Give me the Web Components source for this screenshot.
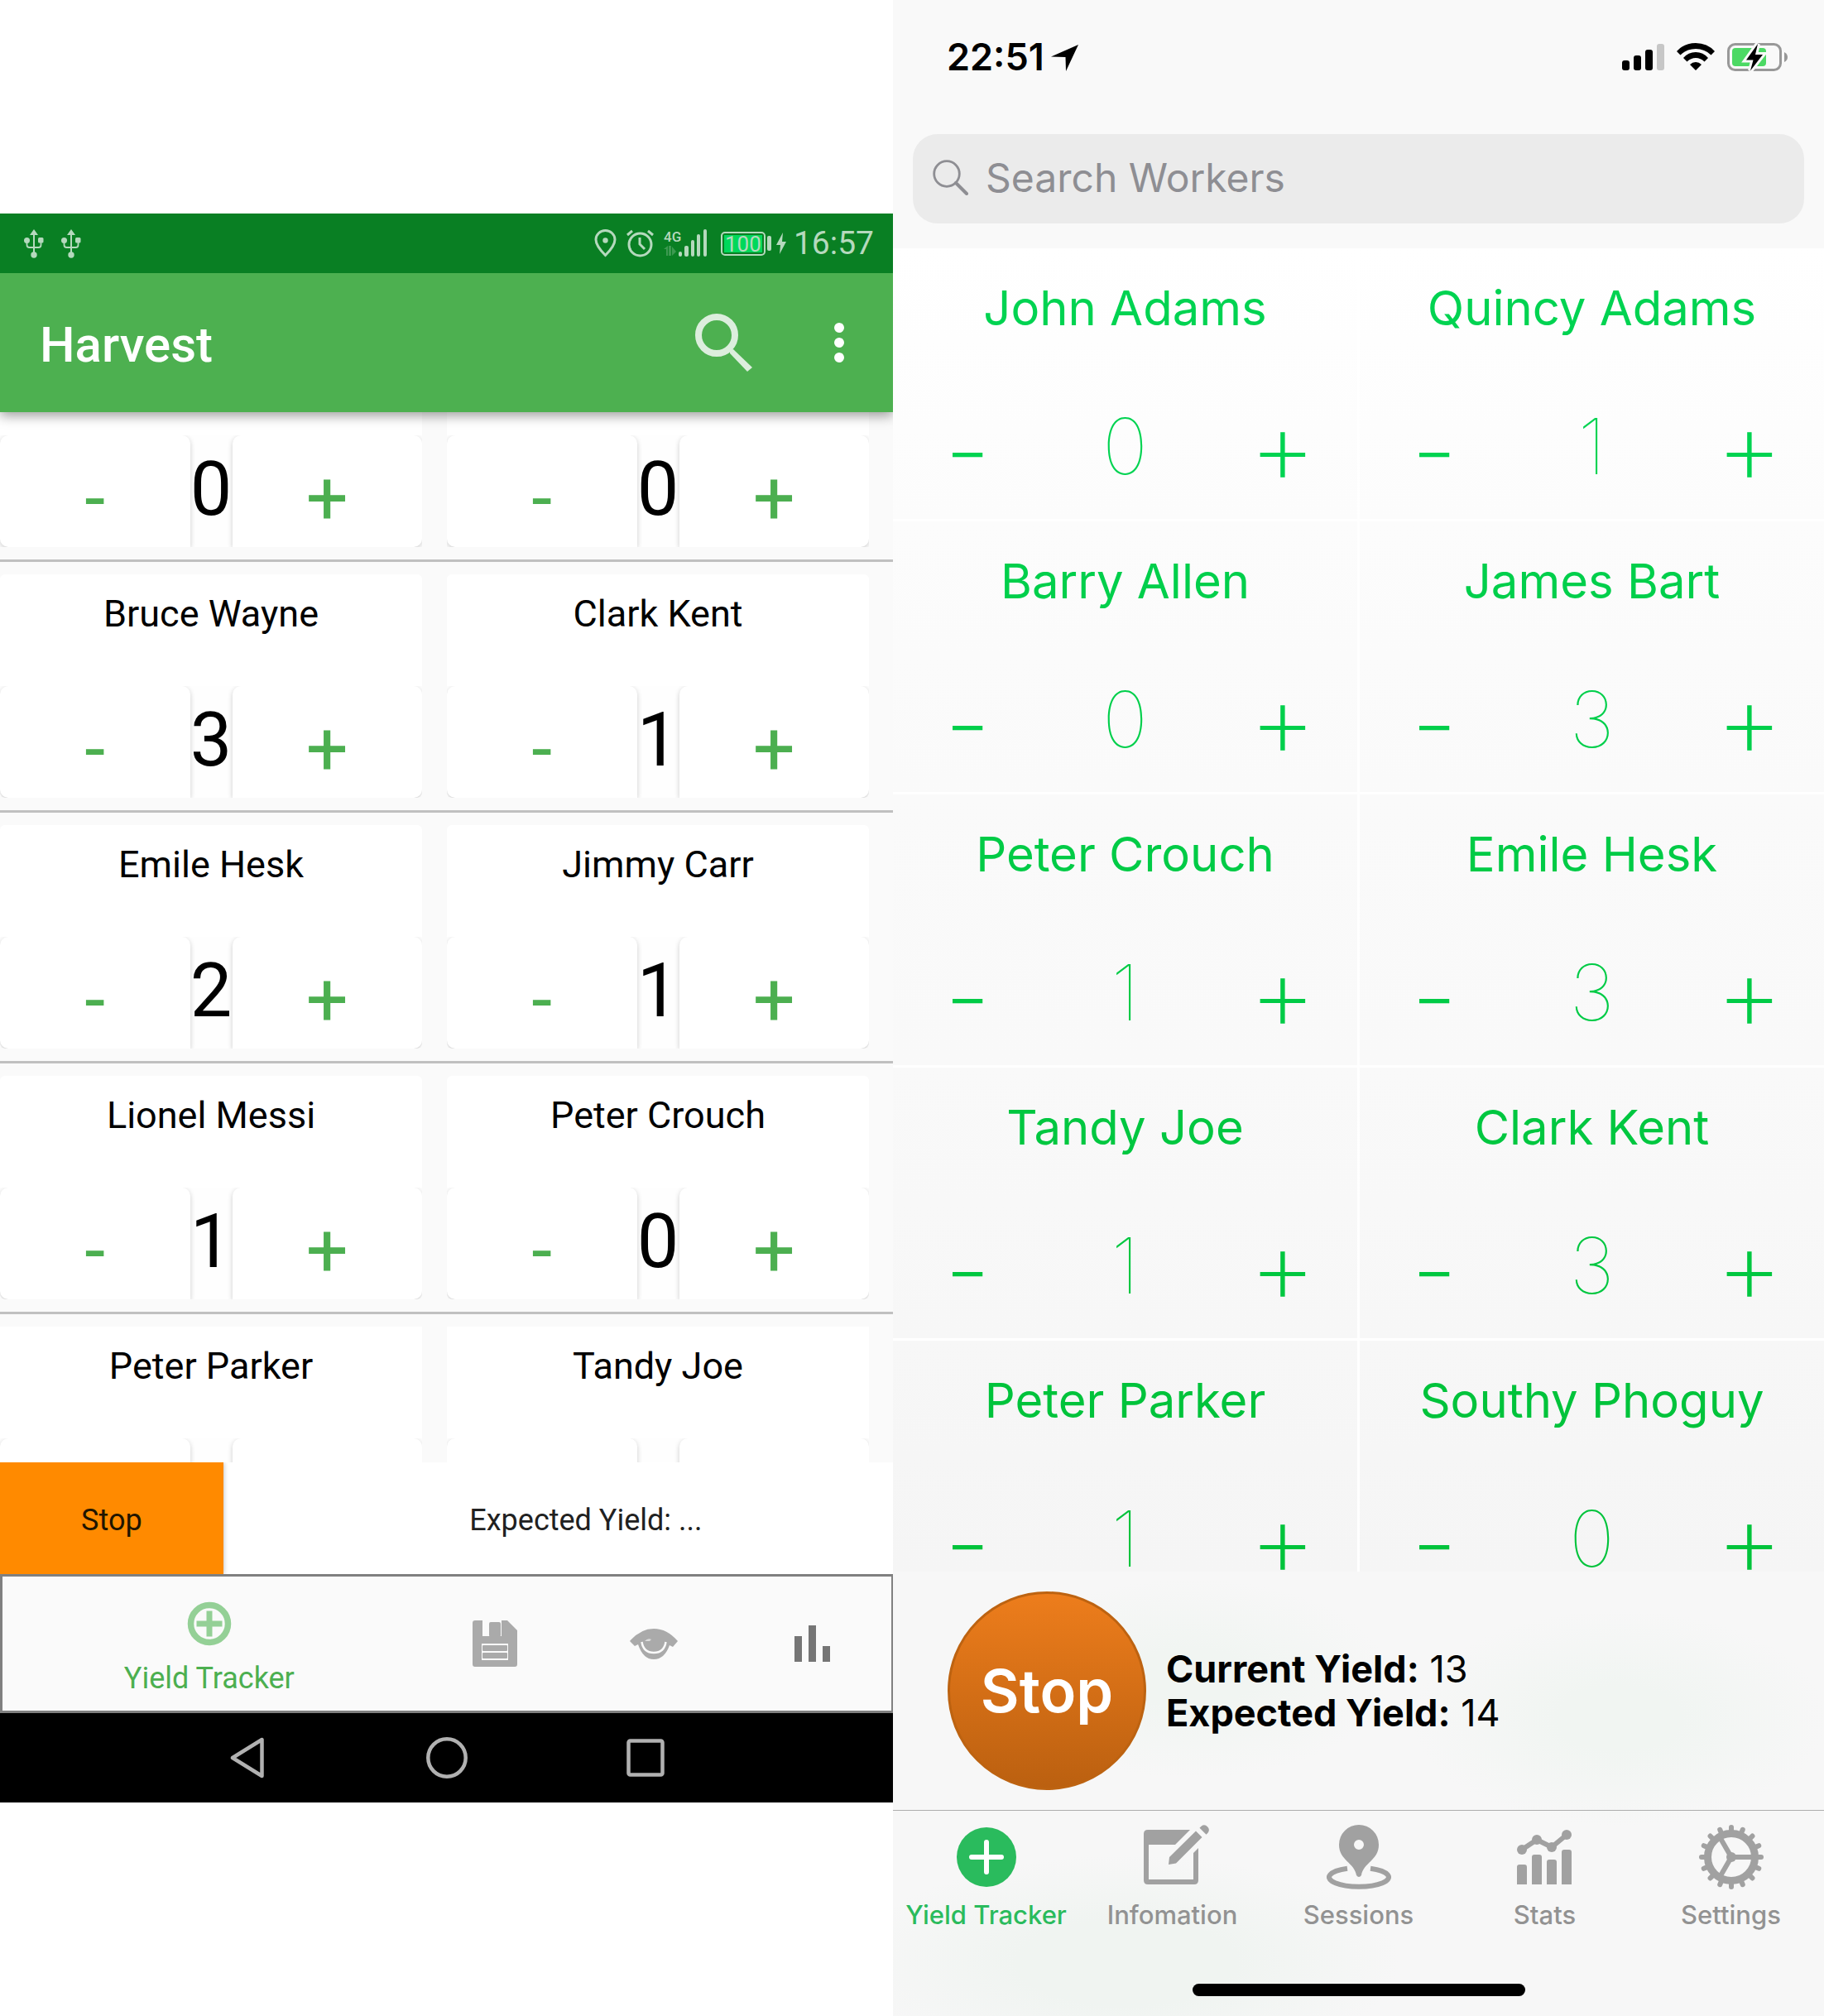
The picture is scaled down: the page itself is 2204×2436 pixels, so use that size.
<!DOCTYPE html>
<html lang="en">
<head>
<meta charset="utf-8">
<meta name="viewport" content="width=device-width, initial-scale=1">
<title>Harvest</title>
<style>
body { margin: 0; background: #fff; }
</style>
</head>
<body>
<harvest-showcase>
  <android-phone></android-phone>
  <ios-phone></ios-phone>
</harvest-showcase>

<script>
const define = (name, html, setup) => {
  const template = document.createElement('template');
  template.innerHTML = html;
  customElements.define(name, class extends HTMLElement {
    constructor() {
      super();
      this.attachShadow({ mode: 'open' }).append(template.content.cloneNode(true));
    }
    connectedCallback() { if (setup) setup(this, this.shadowRoot); }
  });
};

define('harvest-showcase', `
<style>
:host { display: grid; grid-template-columns: 1079fr 1125fr; align-items: center; }
</style>
<slot></slot>`);

/* ---------- Android ---------- */

define('android-status', `
<style>
:host { display: flex; align-items: center; justify-content: space-between; height: 72px; padding: 0 23px 0 29px;
  background: #097f23; color: #b5d9bd; font: 39px/72px Roboto, sans-serif; }
div { display: flex; align-items: center; }
.usb { gap: 21px; }
svg { display: block; flex: none; overflow: visible; }
.pin { margin-right: 12px; } .alarm { margin-right: 12px; } .cell { margin-right: 16px; } .bolt { margin: 0 9px 0 6px; }
.bat { width: 50px; height: 25px; border: 2px solid #b5d9bd; border-radius: 5px; }
.bat span { flex: 1; margin: 2px; height: 21px; background: #00d85a; font-size: 26px; line-height: 22px; text-align: center; }
.tip { width: 5px; height: 18px; margin-left: 2px; border-radius: 2px; background: #b5d9bd; }
</style>
<div class="usb">
  <svg width="24" height="36" viewBox="0 0 24 36"><g id="u" fill="currentColor"><path d="M12 1l5 7h-4v23h-2V8H7z"/><circle cx="3.5" cy="14.500" r="3.5"/><rect x="17" y="11" width="6.500" height="6.500" rx="1.500"/><circle cx="12" cy="32" r="3.700"/><path d="M3.500 16v4q0 3 3 3h11q3 0 3-3v-4" fill="none" stroke="currentColor" stroke-width="1.800"/></g></svg>
  <svg width="24" height="36" viewBox="0 0 24 36"><use href="#u"/></svg>
</div>
<div>
  <svg class="pin" width="27" height="34" viewBox="0 0 27 34" fill="none" stroke="currentColor" stroke-width="3"><path d="M13.500 31.500Q2 20 2 12.500a11.500 11 0 0 1 23 0Q25 20 13.500 31.500z"/><circle cx="13.500" cy="13.500" r="3.200" fill="currentColor" stroke="none"/></svg>
  <svg class="alarm" width="33" height="34" viewBox="0 0 33 34" fill="none" stroke="currentColor" stroke-width="3"><circle cx="16.500" cy="18.500" r="13.500"/><path d="M16 10v8l6 6M1 7l6-5M32 7l-6-5"/></svg>
  <svg class="cell" width="53" height="36" viewBox="0 0 53 36" fill="currentColor"><text x="0" y="16" font-size="17" font-weight="500">4G</text><path opacity=".3" d="M5 21v12H3v-8H0zM9 21v12H6V21zM10 22l5 6-5 5z"/><rect x="18" y="28" width="4" height="6" rx="2"/><rect x="25" y="21" width="5" height="13" rx="2"/><rect x="33" y="14" width="4" height="20" rx="2"/><rect x="40" y="7" width="4" height="27" rx="2"/><rect x="48" y="1" width="4" height="33" rx="2"/></svg>
  <div class="bat"><span>100</span></div><i class="tip"></i>
  <svg class="bolt" width="12" height="26" viewBox="0 0 12 26" fill="currentColor"><path d="M8 0L0 15h5L4 26l8-15H7z"/></svg>
  <time>16:57</time>
</div>`);

define('android-toolbar', `
<style>
:host { display: flex; align-items: center; height: 168px; padding: 0 39px 0 48px; background: #4db050; color: #fff;
  box-shadow: 0 4px 14px rgba(0,0,0,.4); position: relative; z-index: 1; clip-path: inset(0 0 -24px 0); }
h1 { flex: 1; margin: 0; padding-top: 5px; font: 500 60px/70px Roboto, sans-serif; }
button { display: flex; border: 0; padding: 0; background: none; color: inherit; }
.more { margin-left: 77px; padding: 0 20px; }
svg { display: block; }
</style>
<h1>Harvest</h1>
<button type="button" aria-label="Search"><svg width="72" height="72" viewBox="0 0 72 72" fill="none" stroke="#dceedd" stroke-width="8"><circle cx="27" cy="27" r="22"/><path d="M43 45l4-1 23 22-6 5-21-22z" fill="#dceedd" stroke="none"/></svg></button>
<button class="more" type="button" aria-label="More options"><svg width="12" height="48" viewBox="0 0 12 48" fill="#fff"><circle cx="6" cy="6" r="6"/><circle cx="6" cy="24" r="6"/><circle cx="6" cy="42" r="6"/></svg></button>`);

define('android-worker', `
<style>
:host { display: block; overflow: hidden; border-radius: 6px; background: #fff; font-family: Roboto, sans-serif; color: #000; }
.name { height: 135px; padding-top: 21px; box-sizing: border-box; font-size: 45px; line-height: 54px; text-align: center; }
:host([head]) .name { height: 28px; padding: 0; }
.row { display: grid; grid-template-columns: 1fr 51px 1fr; height: 135px; overflow: hidden; background: #fefefe; }
:host([tail]) .row { height: 29px; }
:host([head]), :host([tail]) { border-radius: 0; }
button { height: 135px; border: 0; padding: 18px 0 0; border-radius: 10px 10px 0 10px; background: #fff; box-shadow: 0 2px 6px rgba(0,0,0,.2);
  color: #4caf50; font: 90px/98px Roboto, sans-serif; }
output + button { border-radius: 10px 10px 10px 0; }
output { font-size: 90px; line-height: 132px; text-align: center; }
</style>
<div class="name"><slot></slot></div>
<div class="row"><button type="button" aria-label="Remove one"></button><output></output><button type="button" aria-label="Add one"></button></div>`,
(host, root) => {
  if (host.hasAttribute('tail')) return;
  const [minus, plus] = root.querySelectorAll('button');
  minus.textContent = '-'; plus.textContent = '+';
  root.querySelector('output').textContent = host.getAttribute('count');
});

define('android-row', `
<style>
:host { display: grid; grid-template-columns: 1fr 1fr; gap: 30px; padding: 15px 29px 15px 0; border-bottom: 3px solid #c0c0c0; }
:host([head]) { padding-top: 0; }
:host([tail]) { padding-bottom: 0; border-bottom: 0; }
</style>
<slot></slot>`);

define('android-phone', `
<style>
:host { display: block; background: #fafafa; font-family: Roboto, sans-serif; }
.yield { display: flex; height: 135px; background: #fff; color: #212121; font-size: 36px; line-height: 42px; }
.yield button { width: 25%; border: 0; padding: 5px 0 0; background: #ff8a00; color: #211500; font: inherit; box-shadow: 0 0 6px rgba(0,0,0,.3); clip-path: inset(0 -6px 0 0); }
.yield p { flex: 1; align-self: center; margin: 0; padding: 5px 0 0 67px; text-align: center; }
.tabs { display: flex; align-items: center; height: 168px; box-sizing: border-box; border: 3px solid #808080; border-right-width: 2px; }
.tabs a { flex: 192 0 0; display: flex; flex-direction: column; align-items: center; color: #aaa; text-decoration: none; font-size: 36px; line-height: 42px; }
.tabs a:first-child { flex-grow: 501; padding-top: 12px; color: #4caf50; gap: 18px; }
.sys { display: flex; justify-content: center; gap: 190px; align-items: center; height: 108px; background: #000; }
.sys button { display: flex; border: 0; padding: 0; background: none; }
svg { display: block; }
</style>
<android-status></android-status>
<android-toolbar></android-toolbar>
<main>
  <android-row head><android-worker head count="0"></android-worker><android-worker head count="0"></android-worker></android-row>
  <android-row><android-worker count="3">Bruce Wayne</android-worker><android-worker count="1">Clark Kent</android-worker></android-row>
  <android-row><android-worker count="2">Emile Hesk</android-worker><android-worker count="1">Jimmy Carr</android-worker></android-row>
  <android-row><android-worker count="1">Lionel Messi</android-worker><android-worker count="0">Peter Crouch</android-worker></android-row>
  <android-row tail><android-worker tail>Peter Parker</android-worker><android-worker tail>Tandy Joe</android-worker></android-row>
</main>
<div class="yield"><button type="button">Stop</button><p>Expected Yield: ...</p></div>
<nav class="tabs">
  <a href="#tracker"><svg width="54" height="54" viewBox="0 0 54 54" fill="none" stroke="#94d096"><circle cx="27" cy="27" r="22.500" stroke-width="7.500"/><path d="M27 15v24M15 27h24" stroke-width="7" stroke-linecap="square"/></svg>Yield Tracker</a>
  <a href="#save" aria-label="Save"><svg width="54" height="56" viewBox="0 0 54 56" fill="currentColor"><path fill-rule="evenodd" d="M3 0h9v19h23V0h7l12 12v41q0 3-3 3H3q-3 0-3-3V3q0-3 3-3zM11 28v20h32V28z"/><rect x="20" y="2" width="14" height="18" rx="2"/><rect x="12" y="30" width="30" height="7" rx="1"/><rect x="12" y="39" width="30" height="7" rx="1"/></svg></a>
  <a href="#view" aria-label="View"><svg width="58" height="37" viewBox="0 0 58 37" fill="currentColor"><path d="M0 15Q13 0 29 0t29 15l-6 7-4-2q-6 17-19 17T10 19l-4 2z"/><path d="M14.500 16q2 13 14.500 13t14.500-13" fill="none" stroke="#fafafa" stroke-width="2.500"/><path d="M18 15q4-4 8-2l-2 2z" fill="#dcdcdc"/></svg></a>
  <a href="#stats" aria-label="Stats"><svg width="45" height="46" viewBox="0 0 45 46" fill="#757575"><rect x="1" y="14" width="9" height="31"/><rect x="18" y="1" width="9" height="44"/><rect x="35" y="26" width="9" height="19"/></svg></a>
</nav>
<div class="sys">
  <button type="button" aria-label="Back"><svg width="50" height="50" viewBox="0 0 50 50" fill="none" stroke="#b1b1b1" stroke-width="4.500" stroke-linejoin="round"><path d="M41.500 3v44L6 25z"/></svg></button>
  <button type="button" aria-label="Home"><svg width="50" height="50" viewBox="0 0 50 50" fill="none" stroke="#b1b1b1" stroke-width="4.500"><circle cx="25" cy="25" r="22.700"/></svg></button>
  <button type="button" aria-label="Recent apps"><svg width="50" height="50" viewBox="0 0 50 50" fill="none" stroke="#b1b1b1" stroke-width="4.500"><rect x="4.500" y="4.500" width="41" height="41" rx="2"/></svg></button>
</div>`);

/* ---------- iPhone ---------- */

define('ios-status', `
<style>
:host { display: flex; align-items: center; justify-content: space-between; height: 162px; box-sizing: border-box; padding: 0 43px 24px 65px; }
div { display: flex; align-items: center; }
time { font: 600 45px/52px Inter, sans-serif; margin-right: 8px; }
.icons { gap: 15px; }
svg { display: block; }
</style>
<div><time>22:51</time><svg width="33" height="33" viewBox="0 0 33 33"><path d="M33 1L18 33l-.5-17L0 15.500z"/></svg></div>
<div class="icons">
  <svg width="51" height="34" viewBox="0 0 51 34"><rect x="0" y="21" width="9" height="12" rx="3"/><rect x="14" y="15" width="9" height="18" rx="3"/><rect x="28" y="8" width="9" height="25" rx="3"/><rect x="42" y="1" width="9" height="32" rx="3" fill="#c7c7c7"/></svg>
  <svg width="46" height="34" viewBox="0 0 46 34"><path d="M0 10Q9 0 23 0t23 10l-4.500 4.500Q34 7 23 7T4.500 14.500zM8 18q6-7 15-7t15 7l-4.500 4.500Q29 18 23 18t-10.500 4.500zM16 26q3-3 7-3t7 3l-7 7z"/></svg>
  <svg width="74" height="36" viewBox="0 0 74 36"><rect x="1.500" y="2.500" width="63" height="31" rx="8" fill="none" stroke="#989898" stroke-width="3"/><rect x="6" y="7" width="41" height="22" rx="4" fill="#4cd964"/><path d="M69 12q4 2 4 6t-4 6z" fill="#989898"/><path d="M37 2L23 21.500h8.500L28 34.500 43 15h-9z" fill="#000" stroke="#f9f9f9" stroke-width="6" paint-order="stroke"/></svg>
</div>`);

define('ios-search', `
<style>
:host { display: block; padding: 0 24px 30px; }
label { display: flex; align-items: center; gap: 21px; height: 108px; box-sizing: border-box; padding: 0 0 3px 24px; border-radius: 30px; background: #ebebeb; }
input { flex: 1; min-width: 0; border: 0; padding: 0; background: none; outline: 0; font: 48px/60px Inter, sans-serif; color: #000; }
input::placeholder { color: #8e8e93; opacity: 1; }
svg { display: block; }
</style>
<label><svg width="43" height="43" viewBox="0 0 43 43" fill="none" stroke="#8e8e93"><circle cx="17" cy="17" r="15.300" stroke-width="2.800"/><path d="M28 28l13 13" stroke-width="4" stroke-linecap="round"/></svg><input type="search" aria-label="Search Workers" placeholder="Search Workers"></label>`);

define('ios-worker', `
<style>
:host { display: block; height: 327px; text-align: center; font-family: Inter, sans-serif; }
:host([tail]) { height: 279px; }
.name { padding-top: 36px; height: 149px; box-sizing: border-box; font-size: 58px; line-height: 72px; }
.row { display: grid; grid-template-columns: 180fr 201fr 180fr; align-items: center; height: 180px; }
button { height: 78px; border: 0; padding: 0; background: none; color: inherit; font: 200 126px/78px Inter, sans-serif; }
button:first-child { padding-top: 4px; }
output { font-size: 93px; font-weight: 100; line-height: 78px; }
</style>
<div class="name"><slot></slot></div>
<div class="row"><button type="button" aria-label="Remove one">-</button><output></output><button type="button" aria-label="Add one">+</button></div>`,
(host, root) => { root.querySelector('output').textContent = host.getAttribute('count'); });

define('ios-list', `
<style>
:host { display: grid; grid-template-columns: 1fr 1fr; gap: 3px; background: #fff; }
::slotted(*) { background: linear-gradient(var(--from), var(--to)); }
</style>
<slot></slot>`,
host => {
  const colors = ['#00d351', '#00cf4b', '#00cb46', '#00c740', '#00c33b'];
  const tones = ['#ffffff', '#fcfcfc', '#fafafa', '#f9f9f9', '#f7f7f7', '#f5f5f5'];
  [...host.children].forEach((cell, i) => {
    const row = i >> 1;
    cell.style.color = colors[row];
    cell.style.setProperty('--from', tones[row]);
    cell.style.setProperty('--to', tones[row + 1]);
  });
});

define('ios-yield', `
<style>
:host { display: flex; align-items: center; gap: 24px; height: 288px; box-sizing: border-box; padding-left: 66px; font: 45px/53px Inter, sans-serif; color: #000; }
button { width: 240px; height: 240px; border: 3px solid #bd6311; border-radius: 50%; padding: 0; background: linear-gradient(#ed7d1c, #bb6010); color: #fff; font: 600 72px/80px Inter, sans-serif; }
p { margin: 0; } b { font-weight: 700; }
</style>
<button type="button">Stop</button>
<div><p><b>Current Yield:</b> 13</p><p><b>Expected Yield:</b> 14</p></div>`);

define('ios-tab', `
<style>
:host { flex: 1 1 0; min-width: 0; }
a { display: flex; flex-direction: column; align-items: center; gap: 12px; text-decoration: none; white-space: nowrap; color: #929292; font: 500 31px/37px Inter, sans-serif; }
:host([active]) a { color: #2abb5d; }
</style>
<a href="#tab"><slot name="icon"></slot><slot></slot></a>`);

define('ios-tabbar', `
<style>
:host { display: block; height: 249px; box-sizing: border-box; border-top: 1px solid #adadad; padding-top: 17px; }
nav { display: flex; }
i { display: block; width: 402px; height: 15px; margin: 65px auto 0; border-radius: 8px; background: #000; }
svg { display: block; fill: #a1a1a1; overflow: visible; }
</style>
<nav>
  <ios-tab active><svg slot="icon" width="78" height="78" viewBox="0 0 78 78"><circle cx="39" cy="39" r="36" fill="#2abb5d"/><path d="M39 21v36M21 39h36" stroke="#fff" stroke-width="6" stroke-linecap="round"/></svg>Yield Tracker</ios-tab>
  <ios-tab><svg slot="icon" width="78" height="78" viewBox="-4 0 78 78"><path d="M5 6h51L38 24H6v42h54V34l6-6v39q0 5-5 5H5q-5 0-5-5V11q0-5 5-5z"/><path d="M30 48l1-9L63 7.500l7.500 7.500L39 46.500zM67.500 3.700l2-2q4-3 7.500.5t.500 7.500l-2 2z"/></svg>Infomation</ios-tab>
  <ios-tab><svg slot="icon" width="78" height="78" viewBox="0 0 78 78"><path fill-rule="evenodd" d="M39 0a24 24 0 0 1 24 24c0 19-19 22-21 37q-3 4-6 0C34 46 15 43 15 24A24 24 0 0 1 39 0zm0 18a6 6 0 1 0 0 12 6 6 0 1 0 0-12z"/><path d="M25 52.700A36 11.500 0 1 0 53 52.700" fill="none" stroke="#a1a1a1" stroke-width="6"/></svg>Sessions</ios-tab>
  <ios-tab><svg slot="icon" width="78" height="78" viewBox="1 0 78 78"><path d="M6 72V51q0-3 3-3h6q3 0 3 3v21zM24 72V39q0-3 3-3h6q3 0 3 3v33zM42 72V45q0-3 3-3h6q3 0 3 3v27zM60 72V33q0-3 3-3h6q3 0 3 3v39z"/><path d="M12 30l18-12 18 9 18-15" fill="none" stroke="#a1a1a1" stroke-width="6"/><circle cx="12" cy="30" r="6"/><circle cx="30" cy="18" r="6"/><circle cx="48" cy="27" r="6"/><circle cx="66" cy="12" r="6"/></svg>Stats</ios-tab>
  <ios-tab><svg slot="icon" width="78" height="78" viewBox="0 0 78 78" fill="none" stroke="#a1a1a1"><g class="teeth" stroke-width="6" stroke-linecap="round"></g><circle cx="39" cy="39" r="28.500" stroke-width="9" style="fill:none"/><path d="M39 39h26M39 39L26 16.500M39 39L26 61.500" stroke-width="6"/><circle cx="39" cy="39" r="6" fill="#a1a1a1" stroke="none"/></svg>Settings</ios-tab>
</nav>
<i></i>`,
(host, root) => {
  root.querySelector('.teeth').innerHTML = Array.from({ length: 16 }, (_, i) => `<path d="M39 8v-5" transform="rotate(${i * 22.5} 39 39)"/>`).join('');
});

define('ios-phone', `
<style>
:host { display: block; background: #f9f9f9; }
.bottom { background:
  radial-gradient(ellipse 240px 120px at 32% 24%, #f1f5f2 0 30%, transparent),
  radial-gradient(ellipse 250px 130px at 78% 33%, #f1f5f2 0 30%, transparent),
  radial-gradient(ellipse 330px 130px at 25% 88%, #f0f4f1 0 40%, transparent), #f7f7f7; }
</style>
<ios-status></ios-status>
<ios-search></ios-search>
<ios-list>
  <ios-worker count="0">John Adams</ios-worker><ios-worker count="1">Quincy Adams</ios-worker>
  <ios-worker count="0">Barry Allen</ios-worker><ios-worker count="3">James Bart</ios-worker>
  <ios-worker count="1">Peter Crouch</ios-worker><ios-worker count="3">Emile Hesk</ios-worker>
  <ios-worker count="1">Tandy Joe</ios-worker><ios-worker count="3">Clark Kent</ios-worker>
  <ios-worker tail count="1">Peter Parker</ios-worker><ios-worker tail count="0">Southy Phoguy</ios-worker>
</ios-list>
<div class="bottom"><ios-yield></ios-yield><ios-tabbar></ios-tabbar></div>`);
</script>
</body>
</html>
